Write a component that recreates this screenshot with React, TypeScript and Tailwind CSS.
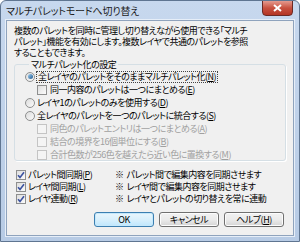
import React from 'react';

const font = "font-['Noto_Sans_CJK_JP','Noto_Sans',sans-serif] [font-feature-settings:'palt']";

function Key({ k }: { k: string }) {
  return (
    <>
      (<span className="underline underline-offset-[1px]">{k}</span>)
    </>
  );
}

function Radio({ checked }: { checked?: boolean }) {
  return (
    <span className="w-[10px] h-[10px] rounded-full border border-[#8e8f8f] bg-gradient-to-br from-[#dcdcdc] to-[#fbfbfb] flex items-center justify-center shrink-0">
      {checked && <span className="w-[5px] h-[5px] rounded-full bg-gradient-to-br from-[#9fd0f2] to-[#1f5a8f]" />}
    </span>
  );
}

function Check({ checked, disabled }: { checked?: boolean; disabled?: boolean }) {
  return (
    <span
      className={
        'w-[10px] h-[10px] border flex items-center justify-center shrink-0 ' +
        (disabled ? 'border-[#c4c4c4] bg-[#f4f4f4]' : 'border-[#8e8f8f] bg-gradient-to-br from-[#dedede] to-[#fbfbfb]')
      }
    >
      {checked && (
        <svg width="8" height="8" viewBox="0 0 8 8">
          <path d="M1 4.2 L3 6.4 L7 1.2" stroke="#3c53a0" strokeWidth="1.6" fill="none" />
        </svg>
      )}
    </span>
  );
}

function Btn({ children, def }: { children: React.ReactNode; def?: boolean }) {
  return (
    <div
      className={
        'h-[15px] rounded-[3px] border flex items-center justify-center leading-none ' +
        (def
          ? 'border-[#3c7fb1] bg-gradient-to-b from-[#eaf6fd] via-[#d9f0fc] to-[#bee6fd] shadow-[inset_0_0_0_1px_#c5e8fb]'
          : 'border-[#707070] bg-gradient-to-b from-[#f2f2f2] via-[#ebebeb] to-[#d4d4d4] shadow-[inset_0_0_0_1px_#fcfcfc]')
      }
    >
      {children}
    </div>
  );
}

export default function App() {
  return (
    <div className={`${font} w-[300px] h-[242px] overflow-hidden bg-gradient-to-b from-[#c7d8ee] to-[#b7cbe5] border border-[#5f7591] rounded-t-[6px] flex flex-col text-black`}>
      {/* title bar */}
      <div className="relative h-[19px] flex items-center pl-[5px]">
        <span className="text-[10px] tracking-[-0.2px] leading-none text-[#1b1b1b]">マルチパレットモードへ切り替え</span>
        <div className="absolute right-[6px] top-[-1px] w-[31px] h-[16px] rounded-b-[4px] border border-[#6b2a25] bg-gradient-to-b from-[#e49a8f] via-[#c8503f] to-[#b33524] flex items-center justify-center">
          <svg width="9" height="8" viewBox="0 0 9 8">
            <path d="M1 1 L8 7 M8 1 L1 7" stroke="white" strokeWidth="2" />
          </svg>
        </div>
      </div>

      {/* client */}
      <div className="flex-1 mx-[5px] mb-[5px] border border-[#8fa3bd] shadow-[0_0_0_1px_#e6eef8] bg-[#f0f0f0] flex flex-col px-[7px] text-[9px] tracking-[-0.5px] whitespace-nowrap">
        <div className="pt-[4px] leading-[11px]">
          複数のパレットを同時に管理し切り替えながら使用できる「マルチ
          <br />
          パレット」機能を有効にします。複数レイヤで共通のパレットを参照
          <br />
          することもできます。
        </div>

        <fieldset className="mt-[1px] border border-[#d5dfe5] rounded-[3px] shadow-[1px_1px_0_#fff] pl-[10px] pb-[3px] h-[102px]">
          <legend className="ml-[4px] px-[2px] leading-[11px]">マルチパレット化の設定</legend>
          <div className="flex flex-col">
            <div className="h-[13px] flex items-center gap-[1px]">
              <Radio checked />
              <span className="border border-dotted border-[#444] leading-[10px] px-[1px]">
                全レイヤのパレットをそのままマルチパレット化<Key k="N" />
              </span>
            </div>
            <div className="h-[13px] flex items-center gap-[3px] pl-[12px]">
              <Check />
              <span>
                同一内容のパレットは一つにまとめる<Key k="E" />
              </span>
            </div>
            <div className="h-[13px] flex items-center gap-[2px]">
              <Radio />
              <span>
                レイヤ1のパレットのみを使用する<Key k="D" />
              </span>
            </div>
            <div className="h-[13px] flex items-center gap-[2px]">
              <Radio />
              <span>
                全レイヤのパレットを一つのパレットに統合する<Key k="S" />
              </span>
            </div>
            <div className="h-[13px] flex items-center gap-[3px] pl-[12px] text-[#a0a0a0]">
              <Check disabled />
              <span>
                同色のパレットエントリは一つにまとめる<Key k="A" />
              </span>
            </div>
            <div className="h-[13px] flex items-center gap-[3px] pl-[12px] text-[#a0a0a0]">
              <Check disabled />
              <span>
                結合の境界を16個単位にする<Key k="B" />
              </span>
            </div>
            <div className="h-[13px] flex items-center gap-[3px] pl-[12px] text-[#a0a0a0]">
              <Check disabled />
              <span>
                合計色数が256色を越えたら近い色に置換する<Key k="M" />
              </span>
            </div>
          </div>
        </fieldset>

        <div className="mt-[8px] flex flex-col pl-[2px]">
          {[
            ['パレット間同期', 'P', '※  パレット間で編集内容を同期させます'],
            ['レイヤ間同期', 'L', '※  レイヤ間で編集内容を同期させます'],
            ['レイヤ連動', 'R', '※  レイヤとパレットの切り替えを常に連動'],
          ].map(([label, k, note]) => (
            <div key={k} className="h-[12px] flex items-center">
              <div className="w-[99px] flex items-center gap-[2px]">
                <Check checked />
                <span>
                  {label}
                  <Key k={k} />
                </span>
              </div>
              <span className="whitespace-pre">{note}</span>
            </div>
          ))}
        </div>

        <div className="mt-[7px] flex justify-end gap-[5px] pr-[2px]">
          <div className="w-[60px]">
            <Btn def>OK</Btn>
          </div>
          <div className="w-[60px]">
            <Btn>キャンセル</Btn>
          </div>
          <div className="w-[60px]">
            <Btn>
              ヘルプ<Key k="H" />
            </Btn>
          </div>
        </div>
      </div>
    </div>
  );
}
